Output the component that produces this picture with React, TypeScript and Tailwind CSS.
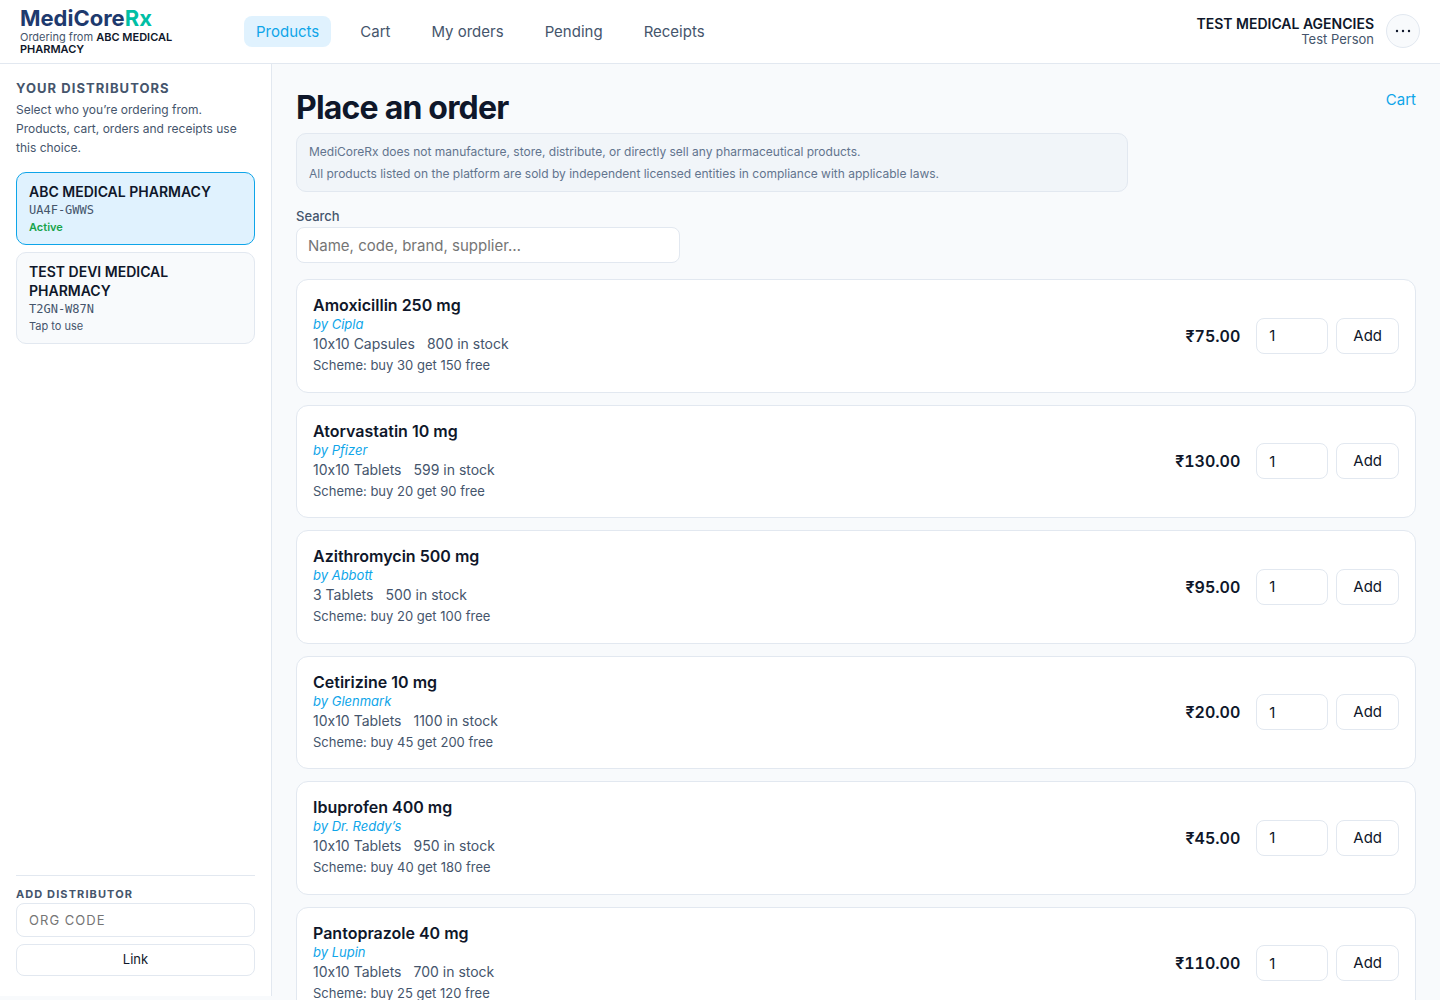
import { useState } from "react";

type Distributor = { name: string; code: string };
type Product = {
  name: string;
  brand: string;
  pack: string;
  stock: number;
  buy: number;
  free: number;
  price: number;
};

const navItems = ["Products", "Cart", "My orders", "Pending", "Receipts"];

const distributors: Distributor[] = [
  { name: "ABC MEDICAL PHARMACY", code: "UA4F-GWWS" },
  { name: "TEST DEVI MEDICAL PHARMACY", code: "T2GN-W87N" },
];

const products: Product[] = [
  { name: "Amoxicillin 250 mg", brand: "Cipla", pack: "10x10 Capsules", stock: 800, buy: 30, free: 150, price: 75 },
  { name: "Atorvastatin 10 mg", brand: "Pfizer", pack: "10x10 Tablets", stock: 599, buy: 20, free: 90, price: 130 },
  { name: "Azithromycin 500 mg", brand: "Abbott", pack: "3 Tablets", stock: 500, buy: 20, free: 100, price: 95 },
  { name: "Cetirizine 10 mg", brand: "Glenmark", pack: "10x10 Tablets", stock: 1100, buy: 45, free: 200, price: 20 },
  { name: "Ibuprofen 400 mg", brand: "Dr. Reddy’s", pack: "10x10 Tablets", stock: 950, buy: 40, free: 180, price: 45 },
  { name: "Pantoprazole 40 mg", brand: "Lupin", pack: "10x10 Tablets", stock: 700, buy: 25, free: 120, price: 110 },
];

export default function App() {
  let [active, setActive] = useState(distributors[0]);
  let [search, setSearch] = useState("");

  let shown = products.filter((p) =>
    `${p.name} ${p.brand}`.toLowerCase().includes(search.toLowerCase()),
  );

  return (
    <div className="min-h-screen bg-slate-50 font-['Inter',sans-serif] text-[#0f172a] [font-variant-ligatures:no-contextual]">
      <Header distributor={active} />
      <div className="flex items-start">
        <Sidebar active={active} setActive={setActive} />
        <main className="min-w-0 flex-1 p-6">
          <div className="flex items-start justify-between">
            <h1 className="pt-px text-[32px] leading-[38px] font-bold tracking-tight">
              Place an order
            </h1>
            <a href="#cart" className="text-[15px] leading-6 text-[#0ea5e9]">
              Cart
            </a>
          </div>
          <div className="mt-1.5 max-w-[832px] rounded-[10px] border border-slate-200 bg-slate-100 px-3 pt-[7px] pb-1.5 text-xs leading-[22px] text-slate-500">
            <p>
              MediCoreRx does not manufacture, store, distribute, or directly
              sell any pharmaceutical products.
            </p>
            <p>
              All products listed on the platform are sold by independent
              licensed entities in compliance with applicable laws.
            </p>
          </div>
          <label
            htmlFor="search"
            className="mt-4 block text-[13px] leading-4 font-medium text-slate-600"
          >
            Search
          </label>
          <input
            id="search"
            type="text"
            placeholder="Name, code, brand, supplier…"
            value={search}
            onChange={(e) => setSearch(e.currentTarget.value)}
            className="mt-[3px] block h-9 w-full max-w-96 rounded-lg border border-slate-200 bg-white px-[11px] text-[15px] placeholder:text-[#757575]"
          />
          <ul className="mt-4 flex flex-col gap-3">
            {shown.map((p) => (
              <ProductCard key={p.name} product={p} />
            ))}
          </ul>
        </main>
      </div>
    </div>
  );
}

const Header = (props: { distributor: Distributor }) => {
  return (
    <header className="flex h-16 items-center border-b border-slate-200 bg-white px-5">
      <div className="w-56 shrink-0 pr-10 pb-[3px]">
        <div className="mb-px text-[22px] leading-6 font-bold text-[#1e3a6e]">
          MediCore<span className="text-[#00bfa5]">Rx</span>
        </div>
        <p className="text-[11px] leading-3 text-slate-600">
          Ordering from{" "}
          <strong className="font-semibold text-[#0f172a]">
            {props.distributor.name}
          </strong>
        </p>
      </div>
      <nav className="flex gap-[17px]">
        {navItems.map((item, i) => (
          <a
            key={item}
            href={"#" + item.toLowerCase().replace(" ", "-")}
            className={
              i === 0
                ? "rounded-lg bg-[#e0f2fe] px-3 py-1 text-[15px] leading-[23px] text-[#0ea5e9]"
                : "rounded-lg px-3 py-1 text-[15px] leading-[23px] text-slate-600"
            }
          >
            {item}
          </a>
        ))}
      </nav>
      <div className="ml-auto flex items-center gap-3 pb-0.5">
        <div className="text-right">
          <div className="text-sm leading-4 font-semibold">
            TEST MEDICAL AGENCIES
          </div>
          <div className="text-[13px] leading-[14px] text-slate-600">
            Test Person
          </div>
        </div>
        <button
          aria-label="Account menu"
          className="flex size-[34px] items-center justify-center rounded-full border border-slate-200 bg-slate-50"
        >
          <svg width="16" height="4" viewBox="0 0 16 4" fill="currentColor">
            <circle cx="2" cy="2" r="1.2" />
            <circle cx="8" cy="2" r="1.2" />
            <circle cx="14" cy="2" r="1.2" />
          </svg>
        </button>
      </div>
    </header>
  );
};

const Sidebar = (props: {
  active: Distributor;
  setActive: (d: Distributor) => void;
}) => {
  return (
    <aside className="flex h-[calc(100vh-68px)] w-[272px] shrink-0 flex-col border-r border-slate-200 bg-white px-4 pt-4 pb-5">
      <h2 className="text-[13px] leading-4 font-bold tracking-[0.08em] text-slate-600">
        YOUR DISTRIBUTORS
      </h2>
      <p className="mt-1 text-xs leading-[19px] text-slate-600">
        Select who you’re ordering from. Products, cart, orders and receipts
        use this choice.
      </p>
      <div className="mt-[15px] flex flex-col gap-[7px]">
        {distributors.map((d) => {
          let isActive = d.code === props.active.code;
          return (
            <button
              key={d.code}
              onClick={() => props.setActive(d)}
              className={
                isActive
                  ? "rounded-[10px] border border-[#0ea5e9] bg-[#e0f2fe] px-3 pt-[9px] pb-2 text-left"
                  : "rounded-[10px] border border-slate-200 bg-slate-50 px-3 pt-[9px] pb-2 text-left"
              }
            >
              <div className="text-sm leading-[19px] font-semibold">
                {d.name}
              </div>
              <div className="font-['DejaVu_Sans_Mono',monospace] text-xs leading-[18px] text-slate-600">
                {d.code}
              </div>
              {isActive ? (
                <div className="text-[11px] leading-[17px] font-semibold text-[#16a34a]">
                  Active
                </div>
              ) : (
                <div className="text-[11px] leading-[17px] text-slate-600">
                  Tap to use
                </div>
              )}
            </button>
          );
        })}
      </div>
      <form
        className="mt-auto border-t border-slate-200 pt-[11px]"
        onSubmit={(e) => e.preventDefault()}
      >
        <label
          htmlFor="org-code"
          className="block text-[11px] leading-[14px] font-bold tracking-widest text-slate-600"
        >
          ADD DISTRIBUTOR
        </label>
        <input
          id="org-code"
          type="text"
          placeholder="ORG CODE"
          className="mt-0.5 block h-[34px] w-full rounded-lg border border-slate-200 bg-white px-3 text-[13px] tracking-[0.08em] uppercase placeholder:text-[#757575]"
        />
        <button className="mt-[7px] h-8 w-full rounded-lg border border-slate-200 bg-white text-[13px]">
          Link
        </button>
      </form>
    </aside>
  );
};

const ProductCard = (props: { product: Product }) => {
  let p = props.product;
  let [quantity, setQuantity] = useState("1");
  return (
    <li className="flex items-center justify-between rounded-xl border border-slate-200 bg-white p-4">
      <div>
        <h3 className="text-base leading-[19px] font-semibold">{p.name}</h3>
        <p className="text-[13px] leading-[18px] text-[#0ea5e9] italic">
          by {p.brand}
        </p>
        <p className="flex gap-3 text-sm leading-[21px] text-slate-600">
          <span>{p.pack}</span>
          <span>{p.stock} in stock</span>
        </p>
        <p className="mt-0.5 text-[13px] leading-normal text-slate-600">
          Scheme: buy {p.buy} get {p.free} free
        </p>
      </div>
      <div className="flex items-center gap-2">
        <span className="mr-2 text-base font-semibold tabular-nums">
          ₹{p.price.toFixed(2)}
        </span>
        <input
          type="text"
          inputMode="numeric"
          aria-label={"Quantity of " + p.name}
          value={quantity}
          onChange={(e) => setQuantity(e.currentTarget.value)}
          className="h-9 w-[72px] rounded-lg border border-slate-200 bg-white px-3 text-[15px]"
        />
        <button className="h-9 rounded-lg border border-slate-200 bg-white px-4 text-[15px]">
          Add
        </button>
      </div>
    </li>
  );
};
